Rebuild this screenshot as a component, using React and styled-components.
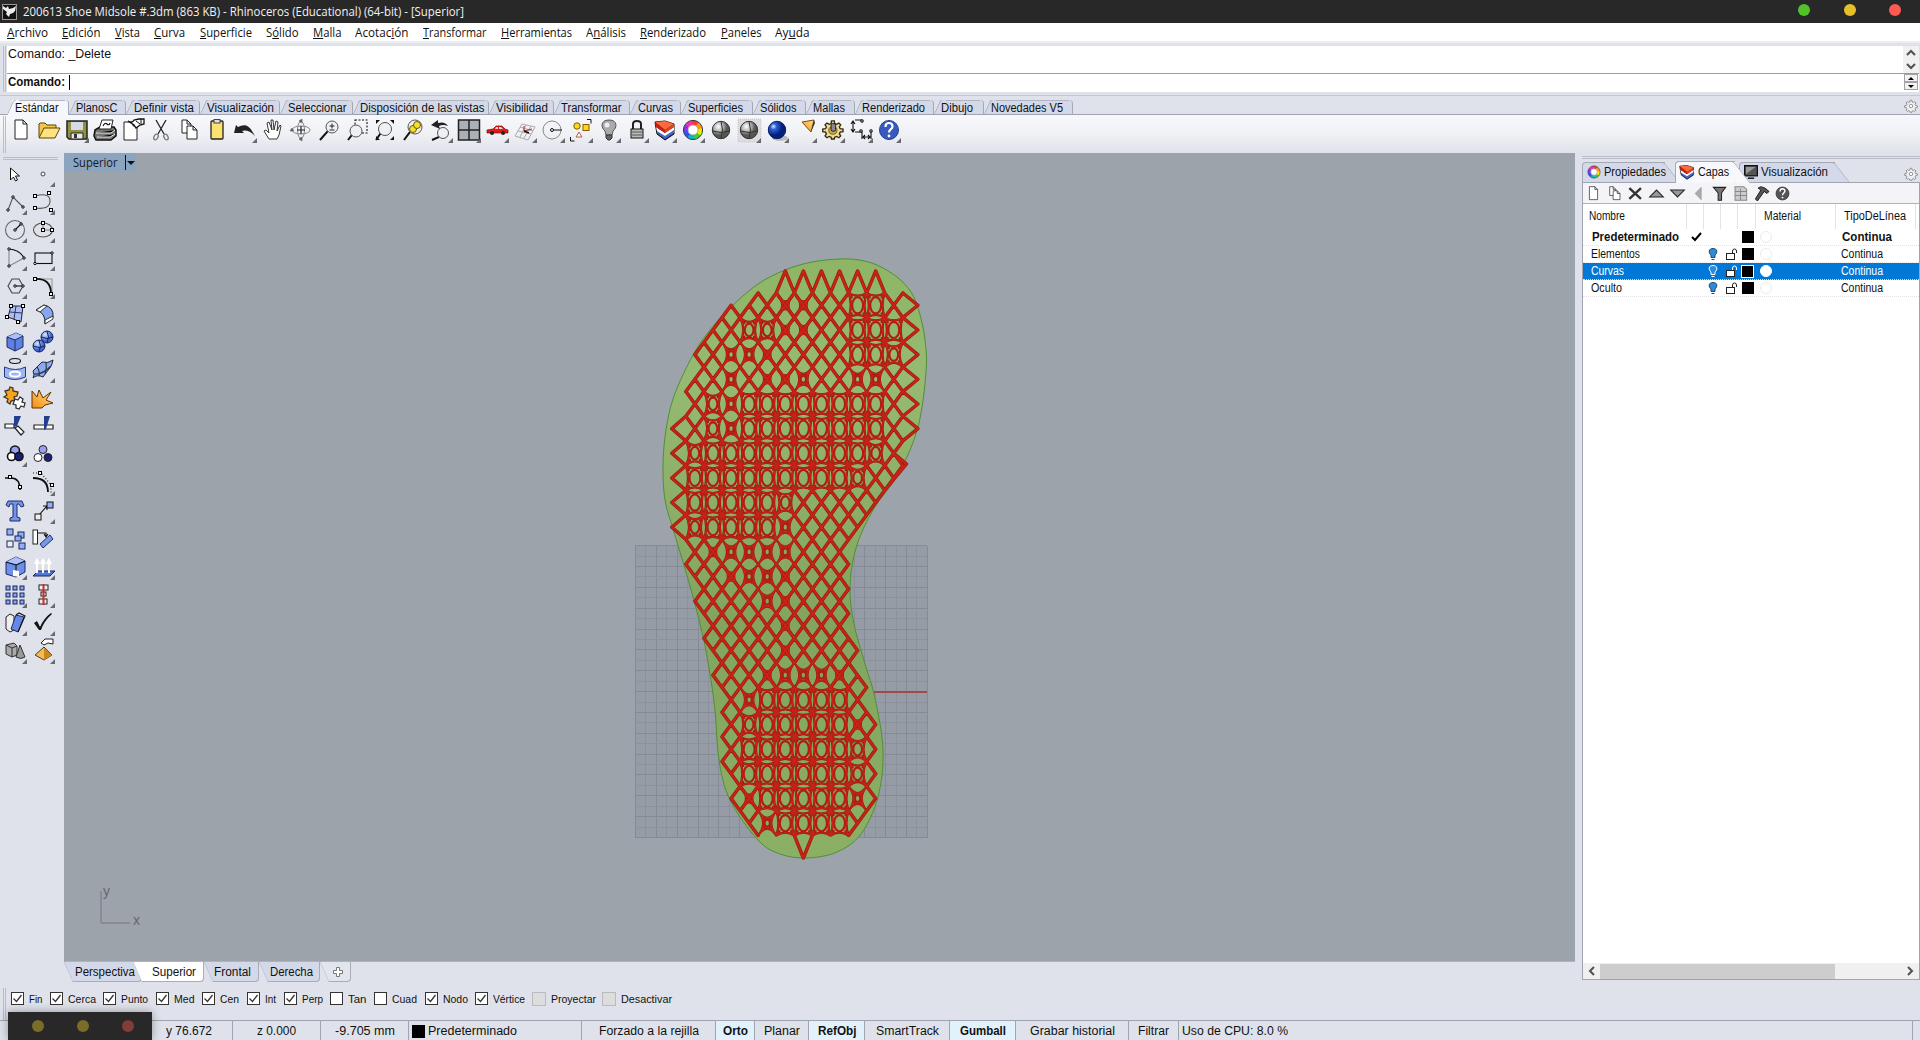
import React from "react";
import styled, { createGlobalStyle, css } from "styled-components";

const SANS = '"Liberation Sans", Arial, sans-serif';
const UI = '"Open Sans", "Noto Sans", sans-serif';

const Global = createGlobalStyle`
  * { box-sizing: border-box; }
  html, body { margin: 0; padding: 0; overflow: hidden; }
  body { background: #dfe2ea; color: #111; font: 12px ${SANS}; }
`;

/* ---------- text fitted to a condensed width ---------- */
const pen = document.createElement("canvas").getContext("2d");
const Fit = styled.span`
  display: inline-block;
  flex: none;
  white-space: nowrap;
  font-family: ${(p) => p.$family};
  font-size: ${(p) => p.$size}px;
  font-weight: ${(p) => (p.$bold ? 700 : 400)};
  width: ${(p) => p.$w}px;
`;
const Glyphs = styled.span`
  display: inline-block;
  transform-origin: 0 50%;
  u { text-decoration: underline; text-underline-offset: 1px; text-decoration-thickness: 1px; }
`;
function Label({ children, w, size = 12, bold = false, family = SANS, mark = -1 }) {
  pen.font = `${bold ? "bold " : ""}${size}px ${family}`;
  const k = w / pen.measureText(children).width;
  return (
    <Fit $w={w} $size={size} $bold={bold} $family={family}>
      <Glyphs style={{ transform: `scaleX(${k})` }}>
        {mark < 0 ? children : (
          <>{children.slice(0, mark)}<u>{children[mark]}</u>{children.slice(mark + 1)}</>
        )}
      </Glyphs>
    </Fit>
  );
}

/* ---------- frame ---------- */
const Window = styled.div`
  width: 1920px; height: 1040px; display: flex; flex-direction: column;
  background: #dfe2ea; overflow: hidden; position: relative;
`;
const TitleBar = styled.header`
  height: 23px; flex: none; background: #282828; color: #f2f2f2;
  display: flex; align-items: center; padding: 0 19px 0 2px; gap: 5px;
`;
const Lights = styled.div`
  margin-left: auto; display: flex; gap: 33.5px; margin-top: -3px;
`;
const Light = styled.i`
  width: 12px; height: 12px; border-radius: 50%; background: ${(p) => p.$c};
`;
const MenuBar = styled.nav`
  height: 18px; flex: none; background: #fff; display: flex; align-items: center;
  padding-left: 7px; gap: 14.25px; color: #111;
`;
const CommandArea = styled.section`
  height: 55px; flex: none; border-top: 2px solid #eceef3; padding: 3px 1px 3px 3px; display: flex; gap: 1px;
  border-bottom: 1px solid #c4c8d6;
`;
const Grip = styled.div`
  width: 3px; flex: none; border-left: 1px solid #b9bdc9; border-right: 1px solid #b9bdc9;
`;
const CommandBox = styled.div`
  flex: 1; display: flex; flex-direction: column; height: 46px; background: #fff;
`;
const History = styled.div`
  height: 28px; border-bottom: 1px solid #9a9da4; display: flex; justify-content: space-between; padding-left: 0.5px; line-height: 16px;
`;
const Prompt = styled.div`
  height: 16px; display: flex; align-items: center; padding-left: 0.5px;
`;
const Caret = styled.i` width: 1px; height: 15px; background: #000; margin-left: 4.5px; `;
const HistScroll = styled.div`
  width: 16px; height: 27px; background: #f0f0f0; display: flex; flex-direction: column;
`;
const Spin = styled.div`
  margin-left: auto; width: 14px; height: 16px; margin-right: 1px; display: flex; flex-direction: column;
`;
const SpinButton = styled.span`
  height: 8px; border: 1px solid #a3a3a3; background: #f3f3f3; display: flex; align-items: center; justify-content: center;
`;

/* ---------- tool bar ---------- */
const TabStrip = styled.div`
  height: 19px; flex: none; display: flex; align-items: flex-end; padding-left: 7px; border-bottom: 1px solid #9fa3ae; position: relative;
`;
const ToolTab = styled.div`
  height: ${(p) => (p.$on ? 15 : 14)}px; margin-bottom: ${(p) => (p.$on ? -1 : 0)}px;
  width: ${(p) => p.$width}px; flex: none; position: relative; z-index: ${(p) => (p.$on ? 1 : 0)};
  padding: 1px 0 0 7.5px; display: flex; align-items: center; background: linear-gradient(90deg, transparent 5px, ${(p) => (p.$on ? "#f6f7fb" : "#d3d9e9")} 5px);
  border-right: 1px solid #a5a9b6; border-radius: 0 4px 0 0;
  &::before { content: ""; position: absolute; z-index: 0; top: 0; left: 3px; right: 3px; height: 1px; background: #b2b6c3; margin-left: 4px; }
  &::after { content: ""; position: absolute; left: 3px; top: 0; width: 5px; height: 100%; transform: skewX(-24deg);
    border-left: 1px solid #a5a9b6; border-radius: 3px 0 0 0; background: ${(p) => (p.$on ? "#f6f7fb" : "#d3d9e9")}; }
  span { z-index: 1; }
`;
const GearSlot = styled.div` margin-left: auto; height: 16px; width: 17px; `;
const ToolBar = styled.div`
  height: 38px; flex: none; background: linear-gradient(#f7f8fb, #f0f1f5 50%, #dfe2ea); display: flex; padding: 1px 0 0 3px;
`;
const ToolRow = styled.div` display: flex; margin-left: 1px; `;
const Slot = styled.div`
  width: ${(p) => p.$w || 28.03}px; height: ${(p) => p.$h || 28}px; flex: none; position: relative;
  svg { display: block; width: 28px; height: 28px; }
  ${(p) => p.$more && css`
    &::after { content: ""; position: absolute; left: 21px; top: 22px; border-left: 5px solid transparent; border-bottom: 5px solid #686a70; }
  `}
`;

/* ---------- workspace ---------- */
const Workspace = styled.main` flex: none; height: 829px; display: flex; `;
const Palette = styled.aside`
  width: 64px; flex: none; padding: 4px 0 0 1px;
`;
const PaletteGrip = styled.div`
  width: 55px; height: 3px; margin-left: 2px; border: 1px solid #b9bdc9; border-width: 1px 0;
`;
const PaletteGrid = styled.div`
  display: grid; grid-template-columns: 28px 28px; grid-auto-rows: 28.05px;
`;
const Center = styled.div` width: 1511px; flex: none; display: flex; flex-direction: column; `;
const Viewport = styled.div`
  height: 808px; background: #9da3ab; position: relative; overflow: hidden;
  & > svg { position: absolute; left: 0; top: 0; }
`;
const ViewTitle = styled.div`
  position: absolute; z-index: 1; left: 0; top: 0; height: 19px; width: 72px; background: #8ba5c0; color: #15181c;
  display: flex; align-items: center; padding-left: 9px; gap: 7px;
`;
const Drop = styled.span`
  height: 15px; border-left: 1px solid #111; padding: 6px 0 0 1px;
  &::after { content: ""; display: block; border: 4px solid transparent; border-top-color: #111; border-bottom: 0; }
`;
const ViewTabs = styled.div` height: 21px; display: flex; border-top: 1px solid #aeb3bd; `;
const ViewTab = styled.div`
  width: ${(p) => p.$width}px; height: 20px; flex: none; display: flex; align-items: center; position: relative; padding-left: ${(p) => p.$pad}px;
  border: 1px solid #a9adb8; border-width: 0 1px 1px 0; border-radius: 0 0 4px 0; z-index: ${(p) => (p.$on ? 2 : 0)};
  background: ${(p) => p.$bg};
  clip-path: polygon(0 0, 100% 0, 100% 100%, 9px 100%);
  margin-left: ${(p) => p.$lap || 0}px;
  &::before { content: ""; position: absolute; left: 4px; top: -1px; height: 23px; border-left: 1.5px solid #a0a4b0; transform: skewX(24deg); }
`;

/* ---------- layers ---------- */
const Side = styled.aside` flex: 1; padding: 3px 0 0 7px; display: flex; flex-direction: column; `;
const SideGrip = styled.div` height: 3px; border: 1px solid #b9bdc9; border-width: 1px 0; flex: none; `;
const SideTabs = styled.div` height: 23px; flex: none; display: flex; padding-top: 2px; align-items: flex-end; `;
const SideTab = styled.div`
  width: ${(p) => p.$width}px; height: ${(p) => (p.$on ? 22 : 20)}px; margin-bottom: ${(p) => (p.$on ? -1 : 0)}px; margin-left: ${(p) => p.$lap || 0}px;
  padding-left: ${(p) => p.$pad || 4}px; gap: 3px; display: flex; align-items: center; position: relative; z-index: ${(p) => (p.$on ? 2 : p.$z || 0)};
  & > svg, & > span { position: relative; z-index: 1; flex: none; }
  &::before { content: ""; position: absolute; inset: 0 10px 0 0; border: 1px solid #a5a9b6; border-width: 1px 0 0 1px; border-radius: 4px 0 0 0; background: ${(p) => (p.$on ? "#f7f8fb" : "#d3d9e9")}; }
  &::after { content: ""; position: absolute; right: 3px; top: 0; bottom: 0; width: 14px; transform: skewX(38deg); border-right: 1px solid #a5a9b6; border-top: 1px solid #a5a9b6; border-radius: 0 3px 0 0; background: ${(p) => (p.$on ? "#f7f8fb" : "#d3d9e9")}; }
`;
const Panel = styled.div`
  height: 798px; flex: none; border: 1px solid #a0a4ae; background: #fff; display: flex; flex-direction: column;
`;
const PanelTools = styled.div`
  height: 21px; flex: none; background: #f4f4f8; border-bottom: 1px solid #b0b3bc; display: flex; align-items: center;
  svg { width: 21px; height: 15px; flex: none; }
`;
const columns = "104px 17px 17px 17px 18px 80px 80px";
const Head = styled.div`
  display: grid; grid-template-columns: ${columns}; height: 25px; flex: none; align-items: center;
`;
const HeadCell = styled.div`
  height: 25px; padding: 0 0 2px ${(p) => p.$pad || 0}px; border-right: 1px solid #e3e3e6; display: flex; align-items: center;
`;
const Row = styled.div`
  display: grid; grid-template-columns: ${columns}; height: 17px; flex: none; align-items: center;
  border-bottom: 1px dotted ${(p) => (p.$on ? "#cde4f8" : "#e4e4e4")};
  background: ${(p) => (p.$on ? "#0078d7" : "#fff")}; color: ${(p) => (p.$on ? "#fff" : "#111")};
`;
const Cell = styled.div`
  display: flex; height: 15px; align-items: center; padding-left: ${(p) => p.$pad || 0}px;
  svg { display: block; flex: none; }
`;
const Swatch = styled.i`
  width: 12px; height: 12px; background: #000; ${(p) => p.$on && "box-shadow: 0 0 0 1px #fff; width: 11px; height: 11px;"}
`;
const Ball = styled.i`
  width: 12px; height: 12px; border-radius: 50%; border: 1px solid ${(p) => (p.$on ? "#fff" : "#ececec")}; background: #fff;
`;
const HScroll = styled.div`
  margin-top: auto; height: 16px; background: #f0f0f0; display: flex; align-items: center; justify-content: space-between; flex: none;
`;
const Thumb = styled.div` height: 15px; width: 235px; background: #cdcdcd; margin-right: auto; `;

/* ---------- bottom ---------- */
const SnapBar = styled.div` height: 38px; flex: none; padding: 6px 0 0 3px; display: flex; `;
const SnapList = styled.div` display: flex; height: 21px; align-items: center; padding-left: 5px; `;
const Snap = styled.div` width: ${(p) => p.$width}px; display: flex; align-items: center; gap: 5px; flex: none; `;
const Box = styled.span`
  width: ${(p) => (p.$off ? 14 : 13)}px; height: ${(p) => (p.$off ? 14 : 13)}px; flex: none; display: flex; background: ${(p) => (p.$off ? "#dcdddd" : "#fff")};
  border: 1px solid ${(p) => (p.$off ? "#b9bbbe" : "#333")};
`;
const Status = styled.footer`
  height: 20px; flex: none; border-top: 1px solid #a0a4ae; display: flex; padding-right: 7px;
`;
const StatusCell = styled.div`
  width: ${(p) => p.$width}px; flex: none; height: 20px; border-right: 1px solid #a0a4ae; display: flex; align-items: center; gap: 3px;
  padding-left: ${(p) => p.$pad}px; background: ${(p) => (p.$on ? "#e2f2fd" : "transparent")};
`;
const LayerInk = styled.i` width: 13px; height: 13px; background: #000; flex: none; `;
const Overlay = styled.div`
  position: absolute; left: 8px; bottom: 0; width: 144px; height: 28px; background: #282828; display: flex; align-items: center; padding-left: 24px; gap: 33px;
  box-shadow: 0 0 10px rgba(0, 0, 0, 0.35);
`;

/* ---------- icons on a 28-unit tile ---------- */
const K = { stroke: "#111", fill: "none", strokeWidth: 1.1 };
const pt = (x, y) => <rect key={x + "," + y} x={x - 1.5} y={y - 1.5} width="3" height="3" fill="#fff" stroke="#000" />;
const dot = (x, y) => <circle key={x + "," + y} cx={x} cy={y} r="1.2" fill="#fff" stroke="#000" />;
const Lens = ({ x = 16, y = 11, r = 6 }) => (
  <g><path d={`M${x - r * 0.7} ${y + r * 0.7}L5 24`} stroke="#111" strokeWidth="2" /><circle cx={x} cy={y} r={r} fill="#eef1f4" stroke="#555" /></g>
);
const Sphere = ({ fill }) => (
  <g><circle cx="14" cy="14" r="8.7" fill={fill} stroke="#333" /><path d="M5.5 15q8.500 3 17 0M14 5.500q3 8.500 0 17" stroke="#333" fill="none" /></g>
);
const sheet = (x, y, w, h) => <path d={`M${x} ${y}h${w - 4}l4 4v${h - 4}h${-w}zM${x + w - 4} ${y}v4h4`} fill="#fff" stroke="#222" />;
const layerStack = (
  <g>
    <path d="M4 6l10-1 9 3v10l-9 6L6 18z" fill="#1f2f66" stroke="#111" />
    <path d="M6 14l8 6 9-6v3l-9 6-8-6z" fill="#4468cf" />
    <path d="M5 11l9 6 9-6v3l-9 6-8-5z" fill="#fff" />
    <path d="M4 6l10-1 9 3-9 6z" fill="#ff6a3a" />
    <path d="M4 6l10 8v3L5 11z" fill="#c91f0c" />
    <path d="M14 14l9-6v3l-9 6z" fill="#e8401d" />
  </g>
);
const wheel = (
  <g fill="none" strokeWidth="4.300">
    {["#f33", "#f90", "#ee0", "#4c3", "#0bc", "#25f", "#83e", "#e3a"].map((c, i) => (
      <circle key={c} cx="14" cy="14" r="7.300" stroke={c} strokeDasharray="6 40" transform={`rotate(${i * 45 - 100} 14 14)`} />
    ))}
    <circle cx="14" cy="14" r="9.600" stroke="#334" strokeWidth="1" />
    <circle cx="14" cy="14" r="5" fill="#fff" stroke="#888" strokeWidth=".7" />
  </g>
);
const gear = (c, s, w = 1) => (
  <path d="M12.500 4h3l.5 3 2 1 2.500-1.500 2 2L21 11l1 2 3 .5v3L22 17l-1 2 1.500 2.500-2 2L18 22l-2 1-.5 2h-3l-.5-2-2-1-2.500 1.500-2-2L7 19l-1-2-3-.5v-3L6 13l1-2-1.500-2.500 2-2L10 8l2-1z" fill={c} stroke={s} strokeWidth={w} />
);
const icons = {
  new: sheet(8, 4, 12, 19),
  open: <g><path d="M4 21V8l1-1h5l2 2h9v4" fill="#f4c64a" stroke="#5a4307" /><path d="M4 22l5-10h16l-5 10z" fill="#ffe27e" stroke="#5a4307" /></g>,
  save: <g><path d="M4 5h20v18H6l-2-2z" fill="#919045" stroke="#222" strokeWidth="1.500" /><path d="M8 6h12v8H8z" fill="#d5dbe4" /><path d="M8 17h12v6H8z" fill="#e8e8e8" stroke="#222" /><path d="M11 18h3v4h-3z" fill="#333" /></g>,
  print: <g><path d="M4 14l5-3h14l2 3v6l-5 4H5l-2-4z" fill="#777" stroke="#111" strokeWidth="1.500" /><path d="M8 13l3-9h11l-2 9z" fill="#fff" stroke="#222" /><path d="M5 17h15l4-3M6 21h13l5-3" stroke="#eee" /><path d="M12 10q2-4 4-2t3-1" {...K} /></g>,
  notes: <g>{sheet(5, 6, 13, 18)}<path d="M9 5q4 3 6-1l5-1h5v5l-4 1-4 3-2-3z" fill="#fff" stroke="#111" strokeWidth="1.300" /><path d="M17 5l4 3M22 3v5" stroke="#111" /></g>,
  cut: <g stroke="#222" fill="none" strokeWidth="1.300"><path d="M9 4l8 14M19 4l-8 14" /><ellipse cx="9" cy="21" rx="2" ry="3" transform="rotate(25 9 21)" stroke="#777" /><ellipse cx="19" cy="21" rx="2" ry="3" transform="rotate(-25 19 21)" stroke="#777" /></g>,
  copy: <g>{sheet(7, 4, 9, 13)}{sheet(12, 10, 10, 13)}</g>,
  paste: <g><rect x="8" y="5" width="12" height="18" rx="1" fill="#fbe170" stroke="#222" strokeWidth="1.300" /><rect x="11" y="3.500" width="6" height="3.500" fill="#ddd" stroke="#444" /></g>,
  undo: <g><path d="M3 17l2-8 2 2q9-5 14 4l3 5q-7-7-13-5l2 2z" fill="#222" /></g>,
  hand: <path d="M10 23L5 15l2-1 3 3-2-10 2-1 3 8-1-10h2l1 10 2-9 2 1-1 9 3-6 1 1-2 9-2 4z" fill="#fff" stroke="#222" strokeWidth=".9" />,
  orbit: <g fill="none" stroke="#888"><ellipse cx="14" cy="14" rx="9" ry="4" /><ellipse cx="14" cy="14" rx="3.500" ry="8.500" /><path d="M14 10v8M10 14h8" stroke="#222" strokeWidth="1.200" /><path d="M12 5l3-2v4zM12 23l3-2v4zM5 12l-2 3h4z" fill="#333" /></g>,
  zoom: <g><Lens x={17} y={11} r={6} /><path d="M14.500 10h5M17 7.500v5M14.500 14h5" stroke="#222" /></g>,
  zoomWin: <g><rect x="12" y="4" width="12" height="13" {...K} strokeDasharray="2 1.500" /><Lens x={13} y={15} r={6} /></g>,
  zoomAll: <g><Lens x={14} y={13} r={6.500} /><path d="M5 8V4h4zM23 8V4h-4zM5 20v4h4zM23 20v4h-4z" fill="#111" /></g>,
  zoomSel: <g><Lens x={16} y={11} r={7} /><circle cx="14" cy="13" r="3.500" fill="#f6df34" stroke="#685c00" /><circle cx="18" cy="9" r="3.500" fill="#f6df34" stroke="#685c00" /></g>,
  zoomBack: <g><Lens x={16} y={17} r={5.500} /><path d="M4 9l7-5v3q7-2 10 3-5-2-9 0l1 3z" fill="#222" /></g>,
  four: <g><rect x="3.500" y="4" width="21" height="20" fill="#aab0b7" stroke="#222" strokeWidth="1.500" /><path d="M14 4v20M3.500 14h21" stroke="#222" strokeWidth="1.500" /></g>,
  car: <g><path d="M4 14l6-1 3-3h6l3 3 3 1v3H4z" fill="#e01b17" stroke="#7c0d0a" strokeWidth=".7" /><path d="M13 11h2v2h-3zM16 11h2l2 2h-4z" fill="#ddd" /><circle cx="9" cy="17" r="2" fill="#222" /><circle cx="20" cy="17" r="2" fill="#222" /></g>,
  plane: <g fill="none" stroke="#aaa"><path d="M4 20L11 8l13 3-7 13zM7 15l13 3M9 11l13 4M15 9L9 21M20 10l-7 12" /><path d="M13 15l8-2M13 15v-5" stroke="#b22" /><path d="M13 15l5 2" stroke="#111" strokeWidth="1.500" /></g>,
  compass: <g fill="none" stroke="#888"><circle cx="13" cy="14" r="9" /><circle cx="13" cy="14" r="1.500" stroke="#111" /><path d="M15 14h8" stroke="#111" /></g>,
  select: <g><circle cx="10" cy="10" r="3.200" fill="#ffd815" stroke="#8a5a00" /><rect x="16" y="8.500" width="6" height="6" fill="#ffd815" stroke="#8a5a00" /><path d="M12 16l3 5H9z" fill="#fff" stroke="#b06040" /><path d="M20 3.500h4v4M3.500 21v4h4" stroke="#111" fill="none" /></g>,
  bulb: <g><path d="M14 4c9 0 8 8 4 11l-1 4h-6l-1-4C6 12 5 4 14 4z" fill="#aaa" stroke="#555" /><circle cx="12" cy="9" r="2.500" fill="#eee" /><path d="M11 19h6v3l-2 2h-2l-2-2z" fill="#666" stroke="#333" /></g>,
  lock: <g><path d="M10 13V8q0-3 4-3t4 3v5" fill="none" stroke="#222" strokeWidth="2" /><rect x="8" y="13" width="12" height="9" fill="#bbb" stroke="#111" /><path d="M9 16h10M9 19h10" stroke="#555" /></g>,
  layers: layerStack,
  wheel,
  shade: <Sphere fill="url(#gray)" />,
  shadeSel: <g><rect x="3" y="3" width="23" height="23" fill="#dcdcdf" stroke="#c7c7cd" strokeDasharray="1 1" /><Sphere fill="url(#gray)" /></g>,
  render: <g><ellipse cx="17" cy="22" rx="8" ry="3" fill="#bbb" /><circle cx="14" cy="14" r="8.700" fill="url(#blue)" stroke="#072065" /></g>,
  spot: <g><path d="M11 6l12-2-3 12z" fill="url(#amber)" stroke="#7a4d10" /><path d="M23 4l1 3-4 9z" fill="#333" /></g>,
  gear: <g transform="translate(1 1.500) scale(.92 .86)">{gear("#f0dc98", "#332b10", 1.500)}<circle cx="14" cy="15" r="4.500" fill="#c9a94a" stroke="#6b571d" /><rect x="12" y="7" width="5" height="9" rx="2" fill="#889" stroke="#111" /></g>,
  dims: <g {...K}><path d="M6 6v9M4 8l2-3 2 3M4 13l2 3 2-3M8 4h7M8 16h7v7M24 15v8M16 21h7M18 19l-2 2 2 2M21 19l2 2-2 2" />{dot(15, 5)}{dot(14, 15)}{dot(24, 15)}</g>,
  help: <g><circle cx="14" cy="14" r="9.500" fill="#3859bd" stroke="#24408f" /><path d="M10.500 11q0-4 3.500-4t3.500 3.500c0 3-3.500 2.500-3.500 6" fill="none" stroke="#fff" strokeWidth="2.200" /><circle cx="14" cy="20" r="1.400" fill="#fff" /></g>,

  arrow: <path d="M9.500 8v12l3-3 2 4 2-1-2-4h4z" fill="#fff" stroke="#111" />,
  point: <circle cx="14" cy="14" r="2" fill="#fff" stroke="#444" />,
  polyline: <g><path d="M7 22l5-13 10 10" {...K} stroke="#555" />{dot(7, 22)}{dot(12, 9)}{dot(22, 19)}</g>,
  curve: <g><path d="M6 8q15-4 15 5t-15 7" {...K} stroke="#555" />{pt(6, 8)}{pt(20, 5)}{pt(6, 20)}{pt(22, 22)}</g>,
  circle: <g><circle cx="14" cy="14" r="9.500" {...K} stroke="#666" /><path d="M14 14l6-6" {...K} />{dot(14, 14)}{dot(20, 8)}</g>,
  ellipse: <g><ellipse cx="14" cy="14" rx="9.500" ry="7" {...K} stroke="#555" /><path d="M14 7v7h9" {...K} stroke="#777" />{pt(14, 7)}{pt(14, 14)}{pt(23, 14)}</g>,
  arc: <g><path d="M8 5v17l15-8" {...K} stroke="#888" /><path d="M8 5q11 1 15 9" {...K} />{dot(8, 5)}{dot(8, 22)}{dot(23, 14)}</g>,
  rect: <g><rect x="6" y="9" width="17" height="10.500" {...K} />{dot(6, 19.5)}{dot(23, 9)}</g>,
  hexagon: <g><path d="M7 14l4-7h7l4 7-4 7h-7z" {...K} stroke="#444" /><path d="M14 14h8" {...K} />{dot(14, 14)}{dot(22, 14)}</g>,
  fillet: <g><path d="M7 7h16v15" {...K} stroke="#999" /><path d="M6 7q16-1 16 15" {...K} strokeWidth="1.800" />{pt(6, 7)}{pt(22, 22)}</g>,
  surface: <g><path d="M10 6h12l-2 16-13-5z" fill="#a9bef6" stroke="#223" /><path d="M15 6l-2 13M9 12l12 1" stroke="#335" />{pt(10, 6)}{pt(22, 6)}{pt(17, 22)}{pt(6, 17)}</g>,
  sweep: <g><path d="M7 10l8-5q10 2 9 12l-8 7q1-11-9-14z" fill="#87a6f1" stroke="#222" /><path d="M7 10l8-5 3 1-7 6zM24 16v3l-8 5v-4z" fill="#fff" stroke="#333" /></g>,
  cube: <g><path d="M6 9l9-4 7 3v11l-8 4-8-4z" fill="#5e80e3" stroke="#1d2b60" /><path d="M6 9l9-4 7 3-8 4z" fill="#a8bdfb" /><path d="M6 9l8 3v11M14 12l8-4" stroke="#1d2b60" fill="none" /></g>,
  spheres: <g stroke="#16255d"><circle cx="18" cy="9" r="6" fill="url(#sky)" /><circle cx="10" cy="18" r="6" fill="url(#sky)" /><path d="M4 18q6 3 12 0M10 12q3 6 0 12M12 9q6 3 12 0M18 3q3 6 0 12" fill="none" /></g>,
  boolean: <g><ellipse cx="14" cy="5" rx="5.500" ry="2.500" {...K} /><path d="M3.500 11q11 5 21 0v10q-11 5-21 0z" fill="#9db6f5" stroke="#223a7c" /><ellipse cx="14" cy="18" rx="5" ry="2.500" fill="none" stroke="#fff" strokeWidth="2" /></g>,
  patch: <g><path d="M4 15l9-9q6 2 11-2-1 6-4 9-3 4-6 8-6-3-10 1 2-3 0-7z" fill="#8ea9f0" stroke="#223" /><path d="M8 11q3 4 2 9M17 6q1 6-1 12M5 18q8 1 17-8" {...K} stroke="#234" /></g>,
  puzzle: <g><path d="M4 7l4-1 1-3 3 1v3l5 1-1 4-3 1 1 3-4 1-1 3-3-2 1-3-4-2 3-2z" fill="#f6a516" stroke="#433" strokeWidth="1.300" /><path d="M14 15l3 1 2-3 3 2-1 3 3 1-1 4-3-1-2 3-3-1v-3l-3-1z" fill="#fff" stroke="#333" strokeWidth="1.300" /></g>,
  burst: <path d="M3 24V7l5 6 2-7 4 8 8-6-5 8 7 3-8 2-3 3z" fill="url(#amber)" stroke="#5e3208" />,
  trim: <g><path d="M4 12h9v4H4zM14 16l3-2 6 6-3 3z" fill="#fff" stroke="#222" strokeWidth="1.200" /><path d="M13 4h7l-4 10-3 1z" fill="#253e8e" /></g>,
  split: <g><path d="M5 13h19v4H5z" fill="#fff" stroke="#222" strokeWidth="1.200" /><path d="M15 4h6l-4 13-2 1z" fill="#253e8e" /></g>,
  join: <g stroke="#111" strokeWidth="1.600"><circle cx="14" cy="10.500" r="4.500" fill="#98a0ef" /><circle cx="10.500" cy="16.500" r="4" fill="#fff" /><circle cx="18" cy="16.500" r="4" fill="#1a2074" /></g>,
  explode: <g stroke="#222"><circle cx="14" cy="9.500" r="4" fill="#98a0ef" /><circle cx="9" cy="17.500" r="4" fill="#fff" /><circle cx="19" cy="17.500" r="4" fill="#1a2074" /></g>,
  edit: <g><path d="M4 9h6q9 0 9 12" {...K} strokeWidth="1.600" />{pt(9, 8)}{pt(19, 18)}</g>,
  control: <g><path d="M4 9q15 0 15 14" {...K} strokeWidth="1.900" /><path d="M4 4h8l10 12v8" {...K} strokeDasharray="1 2" />{pt(11, 4)}{pt(23, 16)}</g>,
  text: <path d="M5 8l2-4h14l2 5-3 1-2-3h-2v13l3 1v3H9v-3l3-1V7H9l-1 3z" fill="#7293e9" stroke="#1d2c6e" />,
  move: <g><path d="M10 18l8-9m-4 0h4v4" {...K} /><rect x="6" y="17" width="6" height="6" fill="#eee" stroke="#111" /><rect x="18" y="5" width="6" height="6" fill="#93aef4" stroke="#111" /></g>,
  clone: <g stroke="#18275f" fill="#93aef4"><rect x="6" y="4" width="6" height="6" /><rect x="17" y="7" width="6" height="6" /><rect x="14" y="11" width="6" height="5" /><rect x="18" y="18" width="6" height="6" /><rect x="6" y="16" width="6" height="6" fill="#eee" /></g>,
  rotate: <g><rect x="4" y="5" width="4.500" height="14" fill="#fff" stroke="#222" /><path d="M11 19l10-9 3 4-10 9z" fill="#7897e6" stroke="#203069" /><path d="M9 8h8v3m-2-2l2 3 2-3" {...K} /></g>,
  scale: <g><path d="M5 9l10-5 9 4v11l-9 5-10-3z" fill="#6c8fea" stroke="#1d2b60" /><path d="M5 9l10-5 9 4-9 4z" fill="#afc1fa" /><path d="M5 9l10 3v12M15 12l9-4" {...K} /><path d="M12 17l6 1v6l-6-1z" fill="#fff" /></g>,
  extrude: <g><path d="M4 23l5-5h17l-5 5z" fill="#5478d9" stroke="#18275f" /><path d="M8 20V9m-2 2l2-4 2 4M14 20V9m-2 2l2-4 2 4M20 20V9m-2 2l2-4 2 4" stroke="#fff" strokeWidth="2" fill="none" /></g>,
  array: <g stroke="#18275f" fill="#8ba5ee">{[5, 12, 19].flatMap((x) => [5, 12, 19].map((y) => <rect key={x + "-" + y} x={x} y={y} width="4" height="4" />))}</g>,
  align: <g><rect x="10" y="4" width="9" height="5" fill="#eee" stroke="#222" /><rect x="12" y="11" width="5" height="4" fill="#eee" stroke="#222" /><rect x="10" y="18" width="8" height="5" fill="#eee" stroke="#222" /><path d="M14.500 3v21" stroke="#d3282c" strokeWidth="2" /></g>,
  history: <g><path d="M5 8l4-3 4 2v14l-4 2-4-3z" fill="#eee" stroke="#222" /><path d="M15 6l8 2-6 15-7-3z" fill="#6388e8" stroke="#1d2b60" /><path d="M15 6l3-2 6 3-7 16" {...K} /></g>,
  check: <path d="M5 14l3-2 3 6Q15 9 22 4l1 1Q15 12 12 21h-2z" fill="#111" />,
  solids: <g stroke="#333"><path d="M5 8l8-2 3 3v9l-5 2-6-3z" fill="#aaa" /><path d="M5 8l6 3 5-2M11 11v9" fill="none" /><path d="M19 8l5 12q-4 3-9 0z" fill="#999" /></g>,
  pyramid: <g><path d="M6 18l9-8 8 8-8 5z" fill="#f2bb54" stroke="#59400e" /><path d="M15 11v12l8-5z" fill="#c98722" /><path d="M12 6l4-4h8v5l-5-1-4 2z" fill="#fff" stroke="#222" /></g>,

  del: <path d="M5 6l17 16M22 6L5 22" stroke="#333" strokeWidth="3.500" />,
  up: <path d="M4 19h20l-10-10z" fill="#999" stroke="#222" strokeWidth="1.500" />,
  down: <path d="M4 9h20l-10 10z" fill="#999" stroke="#222" strokeWidth="1.500" />,
  left: <path d="M18 5v18l-9-9z" fill="#aaa" stroke="#999" />,
  funnel: <path d="M5 5h18l-6 8v11h-5v-11z" fill="#777" stroke="#222" strokeWidth="1.500" />,
  table: <path d="M6 4h13l4 4v16H6zM6 11h17M6 17h17M14 7v17" fill="#ccc" stroke="#888" strokeWidth="1.500" />,
  hammer: <path d="M5 22l3 3 10-14 4 3 3-3-6-5-6-2-4 2 4 3z" fill="#555" stroke="#111" strokeWidth="1.300" />,
  helpGray: <g><circle cx="14" cy="14" r="9.500" fill="#555" stroke="#222" /><path d="M10.500 11q0-4 3.500-4t3.500 3.500c0 3-3.500 2.500-3.500 6" fill="none" stroke="#fff" strokeWidth="2.200" /><circle cx="14" cy="20" r="1.400" fill="#fff" /></g>,
  monitor: <g><rect x="4" y="4" width="20" height="16" fill="#555" stroke="#111" strokeWidth="2" /><path d="M6 6h15L6 17z" fill="#999" /><path d="M9 24h10" stroke="#222" strokeWidth="3" /></g>,
  option: <g>{gear("#eef0f3", "#888", 1.600)}<circle cx="14" cy="14" r="3" fill="#fff" stroke="#888" strokeWidth="1.500" /></g>,
};
const Icon = ({ name, size = 28 }) => <svg viewBox="0 0 28 28" width={size} height={size}>{icons[name]}</svg>;
/* The same drawing cropped to its glyph, for the small header icons. */
const Mini = ({ name, size = 16 }) => <svg viewBox="3 3 22 22" width={size} height={size}>{icons[name]}</svg>;
const Defs = styled.svg` position: absolute; width: 0; height: 0; `;
const Gradients = () => (
  <Defs>
    <defs>
      <radialGradient id="gray" cx=".35" cy=".3"><stop offset="0" stopColor="#fff" /><stop offset=".5" stopColor="#bbb" /><stop offset="1" stopColor="#555" /></radialGradient>
      <radialGradient id="blue" cx=".3" cy=".3"><stop offset="0" stopColor="#d9e6ff" /><stop offset=".35" stopColor="#2a62d6" /><stop offset="1" stopColor="#041e7c" /></radialGradient>
      <radialGradient id="sky" cx=".35" cy=".3"><stop offset="0" stopColor="#dce6ff" /><stop offset="1" stopColor="#3f67cf" /></radialGradient>
      <linearGradient id="amber" x1="0" y1="1" x2="1" y2="0"><stop offset="0" stopColor="#f38b0c" /><stop offset="1" stopColor="#ffe28a" /></linearGradient>
    </defs>
  </Defs>
);

/* ---------- midsole drawing ---------- */
const OUTLINE = [[840, 259], [859, 260], [877, 265], [897, 277], [911, 292], [919, 311], [925, 340], [926, 372], [918, 427], [899, 473], [873, 510], [856, 548], [850, 587], [854, 624], [865, 664], [875, 698], [883, 750], [878, 797], [861, 834], [837, 852], [807, 858], [780, 854], [758, 840], [730, 800], [719, 760], [715, 710], [709, 668], [702, 632], [690, 586], [674, 532], [665, 500], [663, 465], [666, 430], [674, 396], [693, 355], [710, 330], [731, 307], [758, 284], [785, 270], [812, 262]];
const outlinePath = OUTLINE.map((p, i) => {
  const n = OUTLINE.length;
  const a = OUTLINE[(i - 1 + n) % n], b = p, c = OUTLINE[(i + 1) % n], d = OUTLINE[(i + 2) % n];
  const k = (q, r, s) => [q[0] + (s[0] - r[0]) / 6, q[1] + (s[1] - r[1]) / 6];
  const h = k(b, a, c), j = k(c, d, b);
  return `${i ? "" : `M${b}`}C${h} ${j} ${c}`;
}).join("") + "Z";

const DX = 9.04, DY = 12.33, X0 = 785.3, Y0 = 305.3;
const spans = [[-3, 13], [-6, 14], [-7, 13], [-8, 14], [-9, 13], [-10, 14], [-9, 13], [-10, 14], [-11, 13], [-10, 14], [-11, 13], [-12, 14], [-11, 13], [-12, 12], [-11, 13], [-12, 12], [-11, 11], [-12, 10], [-11, 9], [-12, 8], [-11, 7], [-10, 6], [-11, 7], [-10, 6], [-9, 7], [-10, 6], [-9, 7], [-8, 6], [-9, 7], [-8, 8], [-7, 7], [-8, 8], [-7, 9], [-6, 8], [-7, 9], [-6, 10], [-7, 9], [-6, 10], [-7, 9], [-6, 10], [-5, 9], [-6, 10], [-5, 9], [-4, 8], [-3, 7]];
const span = (v) => spans[v + 1];
const dense = {
  0: { b: [0, 2], O: [8, 10] },
  2: { m: [-4, -2], b: [0, 2], O: [8, 10, 12] },
  4: { s: [-6, -4], b: [-2], O: [8, 10], m: [12] },
  6: { s: [-6, 2, 8, 10], b: [-2, 0] },
  8: { m: [-8], s: [-6], O: [-4, -2, 0, 2, 4, 6, 8, 10] },
  10: { m: [-8], s: [-6], O: [-4, -2, 0, 2, 4, 6, 8, 10] },
  12: { m: [-10, 10], O: [-8, -6, -4, -2, 0, 2, 4, 6, 8] },
  14: { O: [-10, -8, -6, -4, -2, 0, 2, 4, 6], m: [8] },
  16: { O: [-10, -8, -6, -4, -2], m: [0] },
  18: { m: [-10], O: [-8, -6, -4, -2], s: [0] },
  20: { b: [-8], s: [-6, -4, -2, 0] },
  22: { b: [-6, 0], s: [-4, -2] },
  24: { s: [-2], b: [0] },
  26: { b: [0] }, 28: { b: [0] },
  30: { s: [0, 2, 4], b: [-2, 6] },
  32: { s: [-4], O: [-2, 0, 2, 4, 6] },
  34: { m: [-4], O: [-2, 0, 2, 4, 6], b: [8] },
  36: { O: [-4, -2, 0, 2, 4, 6], m: [8] },
  38: { O: [-4, -2, 0, 2, 4, 6], m: [8] },
  40: { b: [-4], O: [-2, 0, 2, 4, 6], s: [8] },
  42: { s: [-2], O: [0, 2, 4, 6] },
};
const kindAt = (u, v) => Object.keys(dense[v] || {}).find((k) => dense[v][k].includes(u));
const nodeAt = (u, v) => {
  let x = X0 + u * DX;
  if (u === -12) x -= 5;
  if (u === 14) x += 6;
  return [x, Y0 + v * DY];
};
const has = (u, v) => v >= -1 && v <= 43 && u >= span(v)[0] && u <= span(v)[1];
const struts = [];
const webs = [];
const rings = [];
for (let v = -1; v < 43; v++) {
  for (let u = -12; u <= 14; u++) {
    if (!has(u, v) || Math.abs(u + v) % 2) continue;
    for (const s of [-1, 1]) {
      if (!has(u + s, v + 1)) continue;
      const k = v % 2 === 0 ? kindAt(u, v) : kindAt(u + s, v + 1);
      if (k && k !== "b") continue;
      struts.push(`M${nodeAt(u, v)}L${nodeAt(u + s, v + 1)}`);
    }
  }
}
/* pull: how far the four side strands bend to the cell's centre; stub: length of the corner ribs */
const cell = {
  O: { pull: [4.4, 5.6], ring: [5.500, 8.1], stub: 0.34 },
  m: { pull: [6.500, 8.500], ring: [4.4, 6.3], stub: 0.45 },
  s: { pull: [10, 14], ring: [2.7, 3.500], stub: 0.7 },
  b: { pull: [12, 17] },
};
Object.entries(dense).forEach(([row, kinds]) => {
  const v = +row;
  Object.entries(kinds).forEach(([k, list]) => list.forEach((u) => {
    const [x, y] = nodeAt(u, v);
    const l = x - DX, r = x + DX, t = y - DY, b = y + DY;
    const { pull: [px, py], ring, stub } = cell[k];
    webs.push(`M${l} ${t}Q${x} ${t + py} ${r} ${t}Q${r - px} ${y} ${r} ${b}Q${x} ${b - py} ${l} ${b}Q${l + px} ${y} ${l} ${t}`);
    if (!ring) return;
    rings.push({ x, y, rx: ring[0], ry: ring[1] });
    for (const [sx, sy] of [[-1, -1], [1, -1], [1, 1], [-1, 1]]) {
      webs.push(`M${x + sx * DX} ${y + sy * DY}l${-sx * DX * stub} ${-sy * DY * stub}`);
    }
  }));
});
[0, 2, 4, 6, 8, 10].forEach((u) => {
  const [x, y] = nodeAt(u, -1);
  struts.push(`M${x - DX} ${y}L${x} ${y - 22}L${x + DX} ${y}`);
});
struts.push(`M${nodeAt(1, 43)}L${X0 + 2 * DX} 858L${nodeAt(3, 43)}`);
struts.push(`M${nodeAt(12, 12)}L906.500 464L${nodeAt(11, 15)}`);

const gridLines = Array.from({ length: 29 }, (_, i) => i * 10.42);
function Drawing() {
  return (
    <svg width="1511" height="808" viewBox="64 153 1511 808">
      <defs>
        <linearGradient id="sole" x1="0" y1="0" x2="0" y2="1">
          <stop offset="0" stopColor="#8eb565" /><stop offset=".2" stopColor="#97ba72" /><stop offset=".6" stopColor="#82a45f" /><stop offset="1" stopColor="#8bb065" />
        </linearGradient>
      </defs>
      <g shapeRendering="crispEdges">
        <rect x="635" y="546" width="292" height="292" fill="#969ca5" />
        {gridLines.map((d, i) => (
          <path key={d} d={`M${635.5 + d} 546v292M635 ${545.7 + d}h292`} stroke={i % 2 === 0 ? "#858b94" : "#8c929b"} strokeWidth="1" />
        ))}
        <path d="M781 691.500H927" stroke="#a5464b" strokeWidth="2" />
      </g>
      <path d={outlinePath} fill="url(#sole)" stroke="#4f9034" strokeWidth="1" />
      <g fill="none" strokeLinejoin="round" strokeLinecap="round">
        <path d={struts.join("")} stroke="#8f1a10" strokeWidth="3.400" />
        <path d={webs.join("")} stroke="#971b10" strokeWidth="2.300" />
        {rings.map((r) => <ellipse key={`${r.x},${r.y}`} cx={r.x} cy={r.y} rx={r.rx} ry={r.ry} stroke="#b01e11" strokeWidth="2.200" />)}
        <path d={struts.join("")} stroke="#c62215" strokeWidth="2.300" />
        <path d={webs.join("")} stroke="#c62215" strokeWidth="1.200" />
      </g>
      <g fill="none" stroke="#747980"><path d="M101 891v32H130" /></g>
      <g fill="#63686f" fontFamily={SANS} fontSize="14"><text x="103" y="896">y</text><text x="133" y="925">x</text></g>
    </svg>
  );
}

/* ---------- data ---------- */
const menus = [["Archivo", 41, 0], ["Edición", 38.5, 0], ["Vista", 25, 0], ["Curva", 31, 0], ["Superficie", 52, 0], ["Sólido", 32.5, 1], ["Malla", 28.5, 0], ["Acotación", 53.500, 6], ["Transformar", 63.500, 0], ["Herramientas", 71, 0], ["Análisis", 40, 1], ["Renderizado", 66, 0], ["Paneles", 40.500, 0], ["Ayuda", 34.500, 2]];
const toolTabs = [["Estándar", 61.500, 43.500], ["PlanosC", 57.500, 41.500], ["Definir vista", 73.500, 60], ["Visualización", 80.500, 67], ["Seleccionar", 72.500, 58.500], ["Disposición de las vistas", 136, 124.500], ["Visibilidad", 65, 52], ["Transformar", 76.500, 60.500], ["Curvas", 50.500, 35], ["Superficies", 72, 55], ["Sólidos", 53, 36.500], ["Mallas", 49, 32], ["Renderizado", 79, 63], ["Dibujo", 50, 32], ["Novedades V5", 89.500, 72]];
const tools = ["new", "open", "save*", "print", "notes", "cut", "copy", "paste", "undo*", "hand", "orbit", "zoom", "zoomWin", "zoomAll", "zoomSel", "zoomBack*", "four*", "car*", "plane*", "compass*", "select*", "bulb*", "lock*", "layers*", "wheel*", "shade", "shadeSel*", "render*", "spot*", "gear*", "dims*", "help*"];
const palette = ["arrow", "point*", "polyline*", "curve*", "circle*", "ellipse*", "arc*", "rect*", "hexagon*", "fillet*", "surface*", "sweep*", "cube*", "spheres*", "boolean*", "patch*", "puzzle", "burst", "trim", "split", "join*", "explode", "edit", "control*", "text", "move*", "clone", "rotate", "scale*", "extrude*", "array*", "align*", "history*", "check*", "solids*", "pyramid*"];
const panelTools = ["new", "copy", "del", "up", "down", "left", "funnel", "table", "hammer", "helpGray"];
const layers = [
  { name: "Predeterminado", w: 87, current: true },
  { name: "Elementos", w: 49 },
  { name: "Curvas", w: 33, on: true },
  { name: "Oculto", w: 31 },
];
const snaps = [["Fin", 13.500, 39, 1], ["Cerca", 28, 53, 1], ["Punto", 27, 53, 1], ["Med", 20.500, 46, 1], ["Cen", 19, 44.500, 1], ["Int", 11, 37, 1], ["Perp", 21, 46.500, 1], ["Tan", 18.500, 44, 0], ["Cuad", 25, 50.500, 0], ["Nodo", 25, 50.500, 1], ["Vértice", 32, 57, 1], ["Proyectar", 45, 69.500, 2], ["Desactivar", 51, 90, 2]];
const status = [["y 76.672", 233, 166, 46], ["z 0.000", 88, 24, 39], ["-9.705 mm", 88, 14, 60], ["Predeterminado", 172.500, 3, 89], ["Forzado a la rejilla", 134, 17, 100], ["Orto", 39, 7, 25, 1], ["Planar", 54.500, 9, 36], ["RefObj", 56, 9, 38.500, 1], ["SmartTrack", 85, 11, 63], ["Gumball", 66, 10, 46, 1], ["Grabar historial", 113, 14, 85], ["Filtrar", 50, 9, 31], ["Uso de CPU: 8.0 %", 734, 3, 106]];

const tile = (entry, w, h) => {
  const name = entry.replace("*", "");
  return <Slot key={entry} $w={w} $h={h} $more={entry.endsWith("*")}><Icon name={name} /></Slot>;
};
const Chevron = ({ d, w = 16, h = 13 }) => <svg width={w} height={h} viewBox={`0 0 ${w} ${h}`}><path d={d} fill="none" stroke="#505050" strokeWidth="2" /></svg>;
const Bulb = ({ on }) => <svg width="12" height="14" viewBox="0 0 12 14"><path d="M6 1.500c5 0 4.500 4.500 2 6.500v2.500H4V8C1.500 6 1 1.500 6 1.500zM4.500 12.500h3" fill="#2f8ad8" stroke={on ? "#fff" : "#24496e"} /></svg>;
const Unlock = ({ on }) => <svg width="13" height="14" viewBox="0 0 13 14"><rect x="1.500" y="6.500" width="8" height="6" fill="#fff" stroke="#222" /><path d="M7.500 6V4q0-2 2-2t2 2v2" fill="none" stroke={on ? "#fff" : "#222"} /></svg>;

export default function App() {
  return (
    <Window>
      <Global />
      <Gradients />
      <TitleBar>
        <svg width="16" height="18" viewBox="0 0 16 18"><rect x=".5" y="1.500" width="14" height="15" fill="#111" stroke="#999" /><path d="M1 3l3 2 2-2 1 3 4-1 3-2-1 5-2 2-3 1-1 3-3-3 1-2-4-3z" fill="#eee" /></svg>
        <Label w={441} family={UI}>200613 Shoe Midsole #.3dm (863 KB) - Rhinoceros (Educational) (64-bit) - [Superior]</Label>
        <Lights><Light $c="#52c22b" /><Light $c="#e6c029" /><Light $c="#ff5a52" /></Lights>
      </TitleBar>
      <MenuBar>{menus.map(([t, w, m]) => <Label key={t} w={w} mark={m} family={UI}>{t}</Label>)}</MenuBar>
      <CommandArea>
        <Grip />
        <CommandBox>
          <History>
            <Label w={103}>Comando: _Delete</Label>
            <HistScroll><Chevron d="M4 9l4-4 4 4" /><Chevron d="M4 5l4 4 4-4" /></HistScroll>
          </History>
          <Prompt>
            <Label w={57} bold>Comando:</Label><Caret />
            <Spin>
              <SpinButton><svg width="6" height="3"><path d="M0 3h6L3 0z" /></svg></SpinButton>
              <SpinButton><svg width="6" height="3"><path d="M0 0h6L3 3z" /></svg></SpinButton>
            </Spin>
          </Prompt>
        </CommandBox>
      </CommandArea>
      <TabStrip>
        {toolTabs.map(([t, width, w], i) => <ToolTab key={t} $width={width} $on={i === 0}><Label w={w}>{t}</Label></ToolTab>)}
        <GearSlot><Icon name="option" size={16} /></GearSlot>
      </TabStrip>
      <ToolBar><Grip /><ToolRow>{tools.map((t) => tile(t))}</ToolRow></ToolBar>

      <Workspace>
        <Palette>
          <PaletteGrip />
          <PaletteGrid>{palette.map((t) => tile(t, 28))}</PaletteGrid>
        </Palette>
        <Center>
          <Viewport>
            <ViewTitle><Label w={44.500} family={UI}>Superior</Label><Drop /></ViewTitle>
            <Drawing />
          </Viewport>
          <ViewTabs>
            <ViewTab $width={78} $pad={11} $bg="#d3d9e9"><Label w={60}>Perspectiva</Label></ViewTab>
            <ViewTab $width={71} $pad={19} $bg="#fff" $on $lap={-9}><Label w={44}>Superior</Label></ViewTab>
            <ViewTab $width={55} $pad={10} $bg="#d3d9e9"><Label w={37}>Frontal</Label></ViewTab>
            <ViewTab $width={61} $pad={11} $bg="#d3d9e9"><Label w={43}>Derecha</Label></ViewTab>
            <ViewTab $width={31} $pad={13} $bg="#e3e5ec"><svg width="10" height="10"><path d="M3.500 .5h3v3h3v3h-3v3h-3v-3h-3v-3h3z" fill="#fff" stroke="#777" /></svg></ViewTab>
          </ViewTabs>
        </Center>
        <Side>
          <SideGrip />
          <SideTabs>
            <SideTab $width={93} $pad={5}><Mini name="wheel" size={14} /><Label w={62}>Propiedades</Label></SideTab>
            <SideTab $width={70} $on><Mini name="layers" size={16} /><Label w={31}>Capas</Label></SideTab>
            <SideTab $width={106} $lap={-6} $pad={5}><Mini name="monitor" size={14} /><Label w={67}>Visualización</Label></SideTab>
            <GearSlot><Icon name="option" size={16} /></GearSlot>
          </SideTabs>
          <Panel>
            <PanelTools>{panelTools.map((n) => <Mini key={n} name={n} />)}</PanelTools>
            <Head>
              <HeadCell $pad={6}><Label w={36}>Nombre</Label></HeadCell>
              <HeadCell /><HeadCell /><HeadCell /><HeadCell />
              <HeadCell $pad={7.5}><Label w={37}>Material</Label></HeadCell>
              <HeadCell $pad={8}><Label w={62}>TipoDeLínea</Label></HeadCell>
            </Head>
            {layers.map((l) => (
              <Row key={l.name} $on={l.on}>
                <Cell $pad={l.current ? 9 : 7.5}><Label w={l.w} bold={l.current}>{l.name}</Label></Cell>
                <Cell $pad={3.5}>{l.current && <svg width="11" height="10"><path d="M1 5l3 3 6-7" fill="none" stroke="#000" strokeWidth="2" /></svg>}</Cell>
                <Cell $pad={3}>{!l.current && <Bulb on={l.on} />}</Cell>
                <Cell $pad={4}>{!l.current && <Unlock on={l.on} />}</Cell>
                <Cell $pad={4}><Swatch $on={l.on} /></Cell>
                <Cell $pad={4}><Ball $on={l.on} /></Cell>
                <Cell $pad={l.current ? 5.5 : 4.5}><Label w={l.current ? 50 : 42} bold={l.current}>Continua</Label></Cell>
              </Row>
            ))}
            <HScroll><Chevron d="M11 4L7 8l4 4" w={17} h={16} /><Thumb /><Chevron d="M6 4l4 4-4 4" w={17} h={16} /></HScroll>
          </Panel>
        </Side>
      </Workspace>

      <SnapBar>
        <Grip />
        <SnapList>
          {snaps.map(([t, w, width, state]) => (
            <Snap key={t} $width={width}>
              <Box $off={state === 2}>{state === 1 && <svg width="11" height="11"><path d="M1.500 5.500l3 3 5-6.500" fill="none" stroke="#333" strokeWidth="1.300" /></svg>}</Box>
              <Label w={w} size={11.500}>{t}</Label>
            </Snap>
          ))}
        </SnapList>
      </SnapBar>
      <Status>
        {status.map(([t, width, pad, w, on]) => (
          <StatusCell key={t} $width={width} $pad={pad} $on={on}>
            {t === "Predeterminado" && <LayerInk />}
            <Label w={w} bold={!!on}>{t}</Label>
          </StatusCell>
        ))}
      </Status>
      <Overlay><Light $c="#7a6c29" /><Light $c="#7a6c29" /><Light $c="#823c39" /></Overlay>
    </Window>
  );
}
